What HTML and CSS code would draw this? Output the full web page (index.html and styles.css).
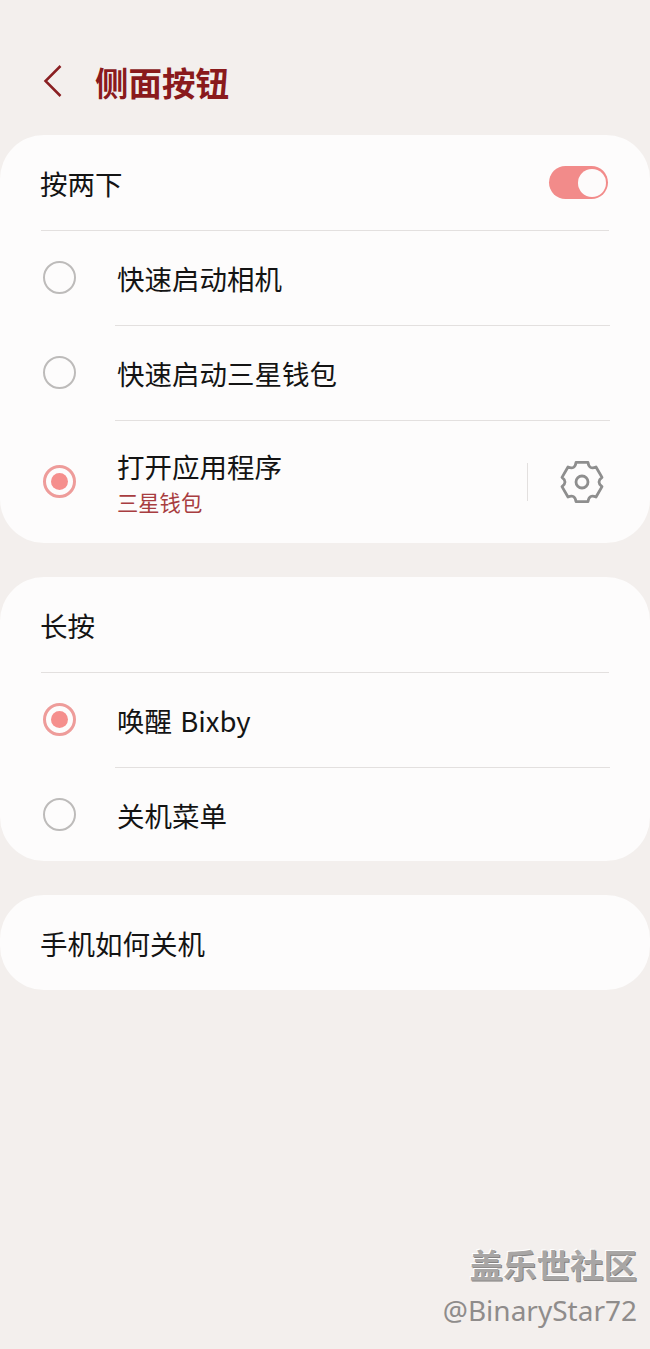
FILE: index.html
```html
<!DOCTYPE html>
<html lang="zh-CN">

<head>
    <meta charset="UTF-8">
    <meta name="viewport" content="width=device-width, initial-scale=1.0">
    <title>侧面按钮</title>
    <link rel="stylesheet" href="styles.css">
</head>

<body>
    <div class="page-container">
        <header class="page-header">
            <svg class="back-icon" width="20" height="34" viewBox="0 0 20 34">
                <path d="M17.500 2 L2.500 17 L17.500 32" />
            </svg>
            <h1>侧面按钮</h1>
        </header>

        <section class="card">
            <div class="row row-head">
                <span class="row-title">按两下</span>
                <div class="toggle">
                    <div class="toggle-knob"></div>
                </div>
            </div>
            <div class="row row-option">
                <div class="radio"></div>
                <div class="row-body">
                    <span class="row-title">快速启动相机</span>
                </div>
            </div>
            <div class="row row-option">
                <div class="radio"></div>
                <div class="row-body">
                    <span class="row-title">快速启动三星钱包</span>
                </div>
            </div>
            <div class="row row-option row-app">
                <div class="radio checked"></div>
                <div class="row-body">
                    <div class="row-text">
                        <span class="row-title">打开应用程序</span>
                        <span class="row-sub">三星钱包</span>
                    </div>
                    <div class="row-divider"></div>
                    <svg class="gear-icon" width="44" height="44" viewBox="0 0 44 44">
                        <path d="M16 2.400 H28 Q29 10 36 7 L42 17.400 Q36 22 42 26.600 L36 37 Q29 34 28 41.600 H16 Q15 34 8 37 L2 26.600 Q8 22 2 17.400 L8 7 Q15 10 16 2.400 Z" />
                        <circle cx="22" cy="22" r="6" />
                    </svg>
                </div>
            </div>
        </section>

        <section class="card">
            <div class="row row-head">
                <span class="row-title">长按</span>
            </div>
            <div class="row row-option">
                <div class="radio checked"></div>
                <div class="row-body">
                    <span class="row-title">唤醒 Bixby</span>
                </div>
            </div>
            <div class="row row-option">
                <div class="radio"></div>
                <div class="row-body">
                    <span class="row-title">关机菜单</span>
                </div>
            </div>
        </section>

        <section class="card">
            <div class="row row-head">
                <span class="row-title">手机如何关机</span>
            </div>
        </section>

        <div class="watermark">
            <div class="watermark-name">盖乐世社区</div>
            <div class="watermark-user">@BinaryStar72</div>
        </div>
    </div>
</body>

</html>
```

FILE: styles.css
```css
* {
    margin: 0;
    padding: 0;
    box-sizing: border-box;
}

body {
    font-family: "Noto Sans CJK SC", "Noto Sans", sans-serif;
    background-color: #f3efed;
    color: #141414;
}

.page-container {
    position: relative;
    width: 650px;
    height: 1349px;
    overflow: hidden;
    display: flex;
    flex-direction: column;
    gap: 34px;
}

.page-header {
    height: 135px;
    margin-bottom: -34px;
    padding: 63px 0 0 43px;
    display: flex;
    align-items: flex-start;
    gap: 32px;
    color: #8a1a1c;
}

.back-icon {
    margin-top: 1px;
}

.back-icon path {
    fill: none;
    stroke: #8a1f22;
    stroke-width: 2.500;
}

.page-header h1 {
    font-size: 33.500px;
    line-height: 38px;
    font-weight: 700;
}

.card {
    background-color: #fdfcfc;
    border-radius: 44px;
    display: flex;
    flex-direction: column;
}

.row {
    display: flex;
    align-items: center;
}

.row-title {
    font-size: 27.500px;
    line-height: 36px;
    word-spacing: 2px;
}

.row-head {
    height: 95px;
    margin: 0 41px;
    justify-content: space-between;
}

.row-head .row-title {
    margin-left: -1px;
}

.row-head:not(:last-child) {
    box-shadow: 0 1px 0 #e3e0df;
}

.row-option {
    height: 95px;
    padding-left: 43px;
}

.row-option:last-child {
    height: 94px;
}

.row-option.row-app {
    height: 123px;
}

.row-body {
    flex: 1;
    align-self: stretch;
    margin: 0 40px 0 39px;
    padding-left: 2px;
    display: flex;
    align-items: center;
}

.row-option + .row-option .row-body {
    border-top: 1px solid #e3e0df;
}

.row-text {
    display: flex;
    flex-direction: column;
    padding-top: 3px;
}

.row-sub {
    font-size: 21.300px;
    line-height: 36px;
    color: #a83d40;
}

.radio {
    width: 33px;
    height: 33px;
    flex-shrink: 0;
    border-radius: 50%;
    border: 2.500px solid #bdbbba;
}

.radio.checked {
    border: 3.500px solid #ee9c9a;
    display: flex;
    align-items: center;
    justify-content: center;
}

.radio.checked::after {
    content: "";
    width: 17px;
    height: 17px;
    border-radius: 50%;
    background-color: #f58f8d;
}

.toggle {
    width: 59px;
    height: 33px;
    margin-right: 1px;
    border-radius: 17px;
    background-color: #f28b8a;
    display: flex;
    align-items: center;
    justify-content: flex-end;
    padding-right: 2px;
}

.toggle-knob {
    width: 28px;
    height: 28px;
    border-radius: 50%;
    background-color: #fdfbfb;
}

.row-divider {
    width: 1px;
    height: 38px;
    margin-left: auto;
    background-color: #e3e0df;
}

.gear-icon {
    margin: 0 6px 0 32px;
}

.gear-icon path,
.gear-icon circle {
    fill: none;
    stroke: #8e8e8e;
    stroke-width: 2.800;
    stroke-linejoin: round;
}

.watermark {
    position: absolute;
    right: 13px;
    top: 1244px;
    text-align: right;
}

.watermark-name {
    font-size: 33.500px;
    line-height: 40px;
    font-weight: 700;
    color: #a8a6a5;
    text-shadow: -1px -1px 0 #ffffff, 1px 1px 0 #858382;
}

.watermark-user {
    margin-top: 4px;
    font-family: "Noto Sans", sans-serif;
    font-size: 28px;
    line-height: 44px;
    color: #8f8c8b;
}
```
